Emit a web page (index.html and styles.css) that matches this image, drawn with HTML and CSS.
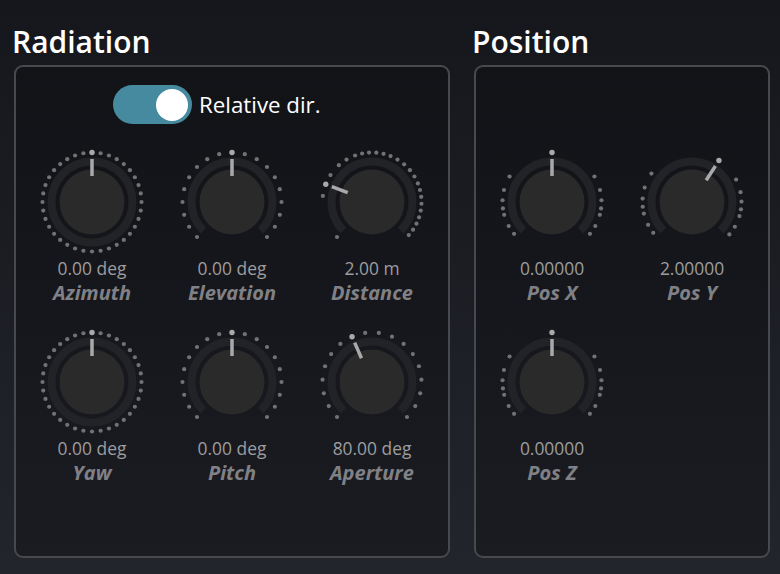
FILE: index.html
```html
<!DOCTYPE html>
<html lang="en">
<head>
<meta charset="utf-8">
<title>Radiation / Position</title>
<link rel="stylesheet" href="styles.css">
</head>
<body>
<main class="app">
  <section class="group group-radiation">
    <h2 class="group-title">Radiation</h2>
    <div class="panel panel-radiation">
      <div class="toggle-row">
        <span class="switch is-on"><span class="switch-thumb"></span></span>
        <span class="switch-label">Relative dir.</span>
      </div>
      <div class="knob-grid cols-3">
        <div class="knob">
          <svg class="dial" viewBox="0 0 110 110" data-track="full" data-count="36" data-start="0" data-end="350" data-angle="0"></svg>
          <div class="knob-value">0.00 deg</div>
          <div class="knob-label">Azimuth</div>
        </div>
        <div class="knob">
          <svg class="dial" viewBox="0 0 110 110" data-track="arc" data-count="19" data-start="-135" data-end="135" data-angle="0"></svg>
          <div class="knob-value">0.00 deg</div>
          <div class="knob-label">Elevation</div>
        </div>
        <div class="knob">
          <svg class="dial" viewBox="0 0 110 110" data-track="arc" data-ticks="-135,-83,-57,-42,-31,-20,-11.5,-3.5,5,13.5,22,31,40.5,50,59,68,76,84,92,100,108,116,124,132" data-angle="-69"></svg>
          <div class="knob-value">2.00 m</div>
          <div class="knob-label">Distance</div>
        </div>
        <div class="knob">
          <svg class="dial" viewBox="0 0 110 110" data-track="full" data-count="36" data-start="0" data-end="350" data-angle="0"></svg>
          <div class="knob-value">0.00 deg</div>
          <div class="knob-label">Yaw</div>
        </div>
        <div class="knob">
          <svg class="dial" viewBox="0 0 110 110" data-track="arc" data-count="19" data-start="-135" data-end="135" data-angle="0"></svg>
          <div class="knob-value">0.00 deg</div>
          <div class="knob-label">Pitch</div>
        </div>
        <div class="knob">
          <svg class="dial" viewBox="0 0 110 110" data-track="arc" data-count="18" data-start="-135" data-end="135" data-angle="-23.8"></svg>
          <div class="knob-value">80.00 deg</div>
          <div class="knob-label">Aperture</div>
        </div>
      </div>
    </div>
  </section>

  <section class="group group-position">
    <h2 class="group-title">Position</h2>
    <div class="panel panel-position">
      <div class="knob-grid cols-2">
        <div class="knob">
          <svg class="dial" viewBox="0 0 110 110" data-track="arc" data-ticks="-130,-119,-105,-97.5,-88,-76,-59,0,59,76,88,97.5,105,119,130" data-angle="0"></svg>
          <div class="knob-value">0.00000</div>
          <div class="knob-label">Pos X</div>
        </div>
        <div class="knob">
          <svg class="dial" viewBox="0 0 110 110" data-track="arc" data-ticks="-128.5,-117.5,-103.5,-95.5,-86,-73,-55,63,78.5,89.5,98.5,106.5,120,131" data-angle="33"></svg>
          <div class="knob-value">2.00000</div>
          <div class="knob-label">Pos Y</div>
        </div>
        <div class="knob">
          <svg class="dial" viewBox="0 0 110 110" data-track="arc" data-ticks="-130,-119,-105,-97.5,-88,-76,-59,0,59,76,88,97.5,105,119,130" data-angle="0"></svg>
          <div class="knob-value">0.00000</div>
          <div class="knob-label">Pos Z</div>
        </div>
      </div>
    </div>
  </section>
</main>
<script src="knobs.js"></script>
</body>
</html>
```

FILE: styles.css
```css
html, body {
  margin: 0;
  height: 100%;
}

body {
  background: linear-gradient(180deg, #16171c 0%, #1b1d23 45%, #22252c 100%);
  font-family: "Open Sans", "Noto Sans", "DejaVu Sans", sans-serif;
  color: #ffffff;
  overflow: hidden;
}

.app {
  display: flex;
  gap: 24px;
  height: 574px;
  box-sizing: border-box;
  padding: 24px 10px 16px 14px;
}

.group {
  display: flex;
  flex-direction: column;
}

.group-radiation {
  width: 436px;
}

.group-position {
  width: 296px;
}

.group-title {
  margin: 0 0 5px -2px;
  font-size: 30px;
  line-height: 36px;
  font-weight: 600;
  color: #ffffff;
}

.panel {
  flex: 1;
  border: 2px solid #48494c;
  border-radius: 9px;
  background: linear-gradient(180deg, #121317 0%, #16171c 50%, #1a1c22 100%);
  padding: 18px 6px 0;
}

.panel-position {
  padding-top: 80px;
}

.toggle-row {
  display: flex;
  align-items: center;
  gap: 7px;
  height: 39px;
  margin-left: 91px;
}

.switch {
  position: relative;
  width: 79px;
  height: 39px;
  border-radius: 20px;
  background: #468a9f;
  flex: none;
}

.switch-thumb {
  position: absolute;
  top: 3.5px;
  right: 4px;
  width: 32px;
  height: 32px;
  border-radius: 50%;
  background: #ffffff;
}

.switch-label {
  font-size: 22.3px;
  line-height: 30px;
  color: #ffffff;
}

.knob-grid {
  display: grid;
  grid-auto-rows: 180px;
  margin-top: 23px;
}

.panel-position .knob-grid {
  margin-top: 0;
}

.cols-3 {
  grid-template-columns: repeat(3, 140px);
}

.cols-2 {
  grid-template-columns: repeat(2, 140px);
}

.knob {
  display: flex;
  flex-direction: column;
  align-items: center;
}

.dial {
  display: block;
  width: 110px;
  height: 110px;
}

.knob-value {
  margin-top: 1px;
  font-size: 17.4px;
  line-height: 20px;
  color: #9d9d9f;
}

.knob-label {
  margin-top: 3px;
  font-size: 20px;
  line-height: 24px;
  font-weight: 700;
  font-style: italic;
  color: #808186;
}
```

FILE: knobs.js
```js
(function () {
  var NS = "http://www.w3.org/2000/svg";
  var C = 55;

  function pt(r, deg) {
    var a = (deg - 90) * Math.PI / 180;
    return [C + r * Math.cos(a), C + r * Math.sin(a)];
  }

  function el(name, attrs) {
    var e = document.createElementNS(NS, name);
    for (var k in attrs) e.setAttribute(k, attrs[k]);
    return e;
  }

  document.querySelectorAll(".dial").forEach(function (svg) {
    var d = svg.dataset;
    var ticks = [];
    if (d.ticks) {
      ticks = d.ticks.split(",").map(Number);
    } else {
      var n = +d.count, s = +d.start, e = +d.end;
      for (var i = 0; i < n; i++) ticks.push(s + (e - s) * i / (n - 1));
    }

    var TR = 40.5;
    if (d.track === "full") {
      svg.appendChild(el("circle", { cx: C, cy: C, r: TR, fill: "none", stroke: "#222327", "stroke-width": 8 }));
    } else {
      var p0 = pt(TR, -135), p1 = pt(TR, 135);
      svg.appendChild(el("path", {
        d: "M" + p0[0] + " " + p0[1] + " A" + TR + " " + TR + " 0 1 1 " + p1[0] + " " + p1[1],
        fill: "none", stroke: "#222327", "stroke-width": 8
      }));
    }

    svg.appendChild(el("circle", { cx: C, cy: C, r: 32.5, fill: "#2a2a2b" }));

    ticks.forEach(function (t) {
      var p = pt(49.5, t);
      svg.appendChild(el("circle", { cx: p[0], cy: p[1], r: 2.1, fill: "#727274" }));
    });

    var ang = +d.angle;
    var a = pt(26, ang), b = pt(43, ang), tip = pt(49.5, ang);
    svg.appendChild(el("line", { x1: a[0], y1: a[1], x2: b[0], y2: b[1], stroke: "#a9a9aa", "stroke-width": 3.5 }));
    svg.appendChild(el("circle", { cx: tip[0], cy: tip[1], r: 2.7, fill: "#a9a9aa" }));
  });
})();
```
